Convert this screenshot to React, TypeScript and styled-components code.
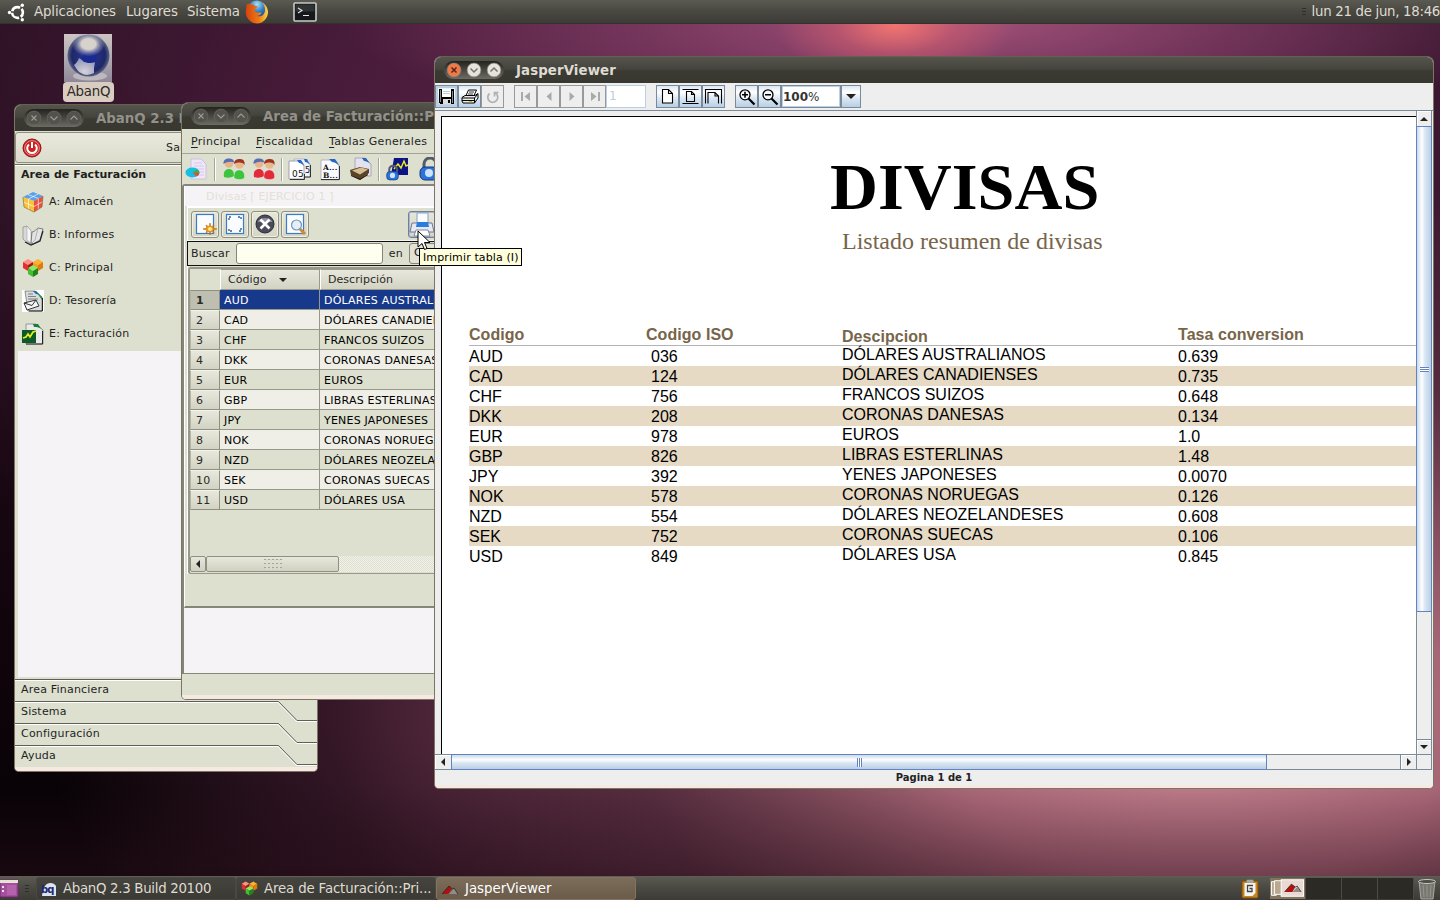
import React from 'react';
import styled, { createGlobalStyle, css } from 'styled-components';

const Global = createGlobalStyle`
  * { box-sizing: border-box; }
  body { margin: 0; overflow: hidden; font-family: "DejaVu Sans", sans-serif; }
`;

const Desktop = styled.div`
  position: relative;
  width: 1440px;
  height: 900px;
  overflow: hidden;
  display: flex;
  flex-direction: column;
  justify-content: space-between;
  background:
    radial-gradient(ellipse 120px 55px at 895px 26px, rgba(245, 118, 112, 0.95), rgba(215, 95, 110, 0.5) 50%, transparent 100%),
    radial-gradient(ellipse 600px 120px at 940px 20px, rgba(172, 88, 128, 0.9), rgba(146, 72, 114, 0.55) 50%, transparent 100%),
    linear-gradient(0deg, rgba(40, 12, 24, 0.55) 0, rgba(50, 18, 32, 0.4) 35px, transparent 110px),
    radial-gradient(ellipse 860px 560px at 1200px 720px, rgba(208, 140, 152, 0.95) 0%, rgba(184, 112, 130, 0.9) 30%, rgba(120, 66, 88, 0.55) 65%, transparent 100%),
    radial-gradient(ellipse 420px 330px at 470px 720px, rgba(84, 38, 62, 0.85), transparent 100%),
    radial-gradient(ellipse 1100px 560px at 800px 120px, #5c2448 0%, #4a1c3c 40%, rgba(50, 20, 40, 0.7) 75%, transparent 100%),
    linear-gradient(180deg, #2a1023 0%, #15060f 60%, #030102 100%);
`;

/* ---------- panels ---------- */

const panel = css`
  position: relative;
  display: flex;
  align-items: center;
  height: 24px;
  color: #dfdbd2;
  font-size: 13.33px;
  background: linear-gradient(180deg, #5b5a52 0%, #4a4942 45%, #3c3b37 100%);
`;

const TopPanel = styled.header`
  ${panel}
  padding-left: 7px;
  border-bottom: 1px solid #33322d;
`;

const PanelMenu = styled.span<{ $w: number }>`
  width: ${p => p.$w}px;
  line-height: 22px;
  letter-spacing: -0.12px;
  white-space: nowrap;
`;

const Clock = styled.span`
  margin-left: auto;
  display: flex;
  gap: 6px;
  align-items: center;
  white-space: nowrap;
  letter-spacing: -0.3px;
  line-height: 22px;
`;

const Grip = styled.i`
  width: 4px;
  height: 8px;
  background: repeating-linear-gradient(180deg, #2f2e2a 0 1px, transparent 1px 3px);
`;

const TaskPanel = styled.footer`
  ${panel}
  border-top: 1px solid #5f5c54;
`;

const Task = styled.div<{ $active?: boolean; $ls?: number }>`
  display: flex;
  flex: none;
  align-items: center;
  gap: 6px;
  width: 200px;
  height: 23px;
  padding-left: 4px;
  border: 1px solid ${p => (p.$active ? '#84735f' : '#494842')};
  border-radius: 3px;
  color: ${p => (p.$active ? '#fff' : '#dfdbd2')};
  letter-spacing: ${p => p.$ls ?? 0}px;
  line-height: 20px;
  white-space: nowrap;
  background: ${p => (p.$active ? 'linear-gradient(180deg,#7c6c59,#6a5b4a)' : 'linear-gradient(180deg,#45443e,#3a3934)')};
`;

const Tray = styled.div`
  margin-left: auto;
  display: flex;
  align-items: center;
  padding-right: 3px;
`;

const Workspaces = styled.div`
  display: flex;
  height: 21px;
  margin: 0 3px 0 11px;
`;

const Workspace = styled.div<{ $on?: boolean }>`
  display: flex;
  width: 36px;
  height: 21px;
  background: ${p => (p.$on ? '#83735f' : '#2b2a25')};
  border-right: 1px solid #4b4a45;
`;

/* ---------- desktop shortcut ---------- */

const Shortcut = styled.div`
  position: absolute;
  left: 63px;
  top: 34px;
  width: 51px;
  display: flex;
  flex-direction: column;
  svg { margin-left: 1px; }
`;

const ShortcutLabel = styled.span`
  width: 51px;
  height: 20px;
  border-radius: 4px;
  text-align: center;
  background: #d8cdc0;
  color: #2e2a26;
  font-size: 13.33px;
  letter-spacing: -0.2px;
  line-height: 19px;
`;

/* ---------- windows ---------- */

const Win = styled.section<{ $x: number; $y: number; $w: number; $h: number; $java?: boolean }>`
  position: absolute;
  left: ${p => p.$x}px;
  top: ${p => p.$y}px;
  width: ${p => p.$w}px;
  height: ${p => p.$h}px;
  display: flex;
  flex-direction: column;
  overflow: hidden;
  border: 1px solid #7d7563;
  border-top-color: #65614f;
  border-radius: 7px 7px 5px 5px;
  background: ${p => (p.$java ? '#eeeeee' : '#dddfcf')};
  font-size: 11px;
  letter-spacing: ${p => (p.$java ? 0 : 0.2)}px;
  color: #1f1f1f;
`;

const TitleBar = styled.div<{ $active?: boolean }>`
  display: flex;
  align-items: center;
  flex: none;
  height: 26px;
  padding-left: 9px;
  gap: 12px;
  white-space: nowrap;
  font-weight: bold;
  font-size: 13.33px;
  letter-spacing: ${p => (p.$active ? 0.1 : 0)}px;
  color: ${p => (p.$active ? '#dfdbd2' : '#94918a')};
  background: linear-gradient(180deg, #55544c 0%, #45453f 45%, #3a3a32 55%, #383831 100%);
`;

const WinButtons = styled.div<{ $active?: boolean }>`
  display: flex;
  flex: none;
  align-items: center;
  justify-content: space-between;
  width: 60px;
  height: 18px;
  padding: 0 2px;
  border-radius: 9px;
  background: linear-gradient(180deg, #24241f, #6c6b64);
`;

const BottomEdge = styled.div`
  flex: none;
  height: 4px;
  margin-top: auto;
  background: #f6e9e2;
`;

const ExitButton = styled.div`
  display: flex;
  flex: none;
  align-items: center;
  height: 31px;
  margin-top: 1px;
  padding-left: 6px;
  border: 1px solid #8e9080;
  border-radius: 3px;
  background: linear-gradient(180deg, #e8e8dc, #dcdccd);
`;

const ExitLabel = styled.span`
  margin-left: 124px;
`;

const AreaTitle = styled.div`
  flex: none;
  height: 21px;
  margin-top: 1px;
  padding-left: 6px;
  border-top: 1px solid #6a6a60;
  box-shadow: inset 0 1px #fff;
  font-weight: bold;
  letter-spacing: 0.05px;
  line-height: 20px;
`;

const ModuleList = styled.div`
  display: flex;
  flex-direction: column;
  flex: none;
  height: 166px;
`;

const ModuleRow = styled.div`
  display: flex;
  align-items: center;
  height: 33px;
  padding-left: 7px;
  gap: 5px;
`;

const EmptyArea = styled.div<{ $h: number; $ml?: number }>`
  flex: none;
  height: ${p => p.$h}px;
  margin-left: ${p => p.$ml ?? 0}px;
  background: #f6f3f7;
`;

const AreaTab = styled.div`
  display: flex;
  justify-content: space-between;
  flex: none;
  height: 22px;
  padding-left: 6px;
  line-height: 22px;
`;

const TabList = styled.div`
  display: flex;
  flex-direction: column;
  padding-top: 2px;
`;

const TabShape = styled.svg`
  display: block;
  margin-left: -302px;
`;

const TabLabel = styled.span`
  position: relative;
  width: 120px;
`;

/* ---------- billing window ---------- */

const MenuBar = styled.div`
  display: flex;
  flex: none;
  height: 25px;
  padding-left: 9px;
  line-height: 25px;
  letter-spacing: 0.3px;
  border-bottom: 1px solid #a3a497;
  white-space: nowrap;
  u { text-underline-offset: 2px; }
`;

const MenuItem = styled.span<{ $w: number }>`
  width: ${p => p.$w}px;
`;

const IconBar = styled.div`
  display: flex;
  flex: none;
  align-items: center;
  height: 30px;
  padding-left: 3px;
  svg { flex: none; }
`;

const Spacer = styled.i<{ $w: number; $line?: boolean }>`
  display: flex;
  flex: none;
  width: ${p => p.$w}px;
  height: 23px;
  justify-content: center;
  &::before {
    content: '';
    width: ${p => (p.$line ? 2 : 0)}px;
    background: linear-gradient(90deg, #a3a497 50%, #fff 50%);
  }
`;

const MdiArea = styled.div`
  display: flex;
  flex-direction: column;
  flex: none;
  height: 490px;
  border: 1px solid #85867a;
  border-top-width: 2px;
  border-left-width: 2px;
  border-radius: 3px 0 0 0;
  background: #f6f3f7;
`;

const SubWindow = styled.div`
  display: flex;
  flex-direction: column;
  height: 422px;
  border-left: 1px solid #fff;
  border-bottom: 2px solid #85867a;
  background: #dddfcf;
`;

const SubTitle = styled.div`
  flex: none;
  height: 20px;
  padding-left: 21px;
  line-height: 21px;
  background: #f6f3f7;
  color: #e3e1d5;
  letter-spacing: 0.18px;
`;

const SubBody = styled.div`
  display: flex;
  flex-direction: column;
  margin-left: 2px;
  border-top: 2px solid #fff;
  border-left: 1px solid #fff;
`;

const ActionBar = styled.div`
  display: flex;
  height: 33px;
  align-items: center;
  gap: 2px;
  padding-left: 3px;
  border-bottom: 1px solid #f4f4ee;
`;

const ActionButton = styled.div<{ $hot?: boolean; $push?: number }>`
  display: flex;
  flex: none;
  align-items: center;
  justify-content: center;
  width: 28px;
  height: 27px;
  margin-left: ${p => p.$push ?? 0}px;
  border: 1px solid ${p => (p.$hot ? '#6f7f9c' : '#8e9080')};
  border-radius: 3px;
  box-shadow: inset 0 0 0 1px ${p => (p.$hot ? '#a9b6cc' : '#efefe6')};
  background: linear-gradient(180deg, #e6e6d9, #d5d6c6);
`;

const SearchRow = styled.div`
  display: flex;
  align-items: center;
  height: 25px;
  margin-left: -1px;
  padding-left: 3px;
  border: 1px solid #111;
  border-right: 0;
`;

const SearchInput = styled.div`
  flex: none;
  width: 147px;
  height: 21px;
  margin: 0 6px 0 6px;
  border: 1px solid #85867a;
  border-radius: 3px;
  background: #fffff0;
`;

const FieldPick = styled.div`
  flex: none;
  width: 60px;
  height: 21px;
  margin-left: 6px;
  padding-left: 4px;
  line-height: 18px;
  border: 1px solid #85867a;
  border-radius: 3px;
  background: #e2e2d5;
`;

const Grid = styled.div`
  display: flex;
  flex-direction: column;
  height: 307px;
  margin-top: 1px;
  border: 2px solid #97988a;
  border-width: 2px 0 1px 2px;
  border-radius: 3px;
  white-space: nowrap;
`;

const GridRow = styled.div<{ $tone: 'sel' | 'light' | 'dark' | 'head' }>`
  display: grid;
  grid-template-columns: 30px 100px 170px;
  grid-template-rows: 100%;
  flex: none;
  height: ${p => (p.$tone === 'head' ? 21 : 20)}px;
  color: ${p => (p.$tone === 'sel' ? '#fff' : '#000')};
  background: ${p => ({ sel: '#17398c', light: '#efefe7', dark: '#dddfcf', head: '#dddfcf' }[p.$tone])};
`;

const HeadCell = styled.div<{ $plain?: boolean }>`
  display: flex;
  align-items: center;
  gap: 13px;
  padding-left: 7px;
  color: #2a2a26;
  letter-spacing: 0.05px;
  ${p =>
    !p.$plain &&
    css`
      border: 1px solid #9a9b8d;
      border-left-color: #fff;
      background: linear-gradient(180deg, #e7e7dc, #d3d3c4);
    `}
`;

const NumCell = styled.div<{ $sel?: boolean }>`
  padding-left: 5px;
  line-height: 19px;
  color: #2a2a26;
  font-weight: ${p => (p.$sel ? 'bold' : 'normal')};
  border: 1px solid #8e9080;
  border-top-color: ${p => (p.$sel ? '#8e9080' : '#f2f2ea')};
  border-left-color: #b5b6a8;
  background: ${p => (p.$sel ? '#bebfb0' : 'linear-gradient(180deg,#e7e7dc,#d3d3c4)')};
`;

const Cell = styled.div`
  padding-left: 4px;
  line-height: 21px;
  border-right: 1px solid #97988a;
  border-bottom: 1px solid #97988a;
`;

const GridScroll = styled.div`
  display: flex;
  height: 16px;
  margin-top: 46px;
  background: repeating-conic-gradient(#f2f2ea 0 25%, #dddfcf 0 50%) 0 0 / 2px 2px;
`;

const ScrollPart = styled.div<{ $w: number }>`
  display: flex;
  align-items: center;
  justify-content: center;
  width: ${p => p.$w}px;
  border: 1px solid #8e9080;
  border-radius: 2px;
  background: linear-gradient(180deg, #e7e7dc, #d0d1c0);
`;

const Dots = styled.i`
  width: 18px;
  height: 11px;
  background: repeating-linear-gradient(90deg, transparent 0 2px, #dcdccd 2px 4px),
    repeating-linear-gradient(180deg, #a3a497 0 1px, transparent 1px 4px);
`;

const Tooltip = styled.div`
  position: absolute;
  left: 419px;
  top: 248px;
  width: 103px;
  height: 18px;
  padding-left: 3px;
  border: 1px solid #000;
  background: #ffffdc;
  color: #000;
  font-size: 11px;
  letter-spacing: 0.12px;
  line-height: 17px;
  white-space: nowrap;
`;

const Pointer = styled.svg`
  position: absolute;
  left: 417px;
  top: 230px;
`;

/* ---------- report viewer ---------- */

const JavaBar = styled.div`
  display: flex;
  flex: none;
  height: 28px;
  padding-top: 2px;
  border-bottom: 1px solid #7a8a99;
`;

const ButtonGroup = styled.div<{ $ml?: number }>`
  display: flex;
  height: 23px;
  margin-left: ${p => p.$ml ?? 0}px;
`;

const JavaButton = styled.div<{ $off?: boolean; $focus?: boolean; $w?: number }>`
  display: flex;
  align-items: center;
  justify-content: center;
  width: ${p => p.$w ?? 23}px;
  border: 1px solid ${p => (p.$off ? '#999' : '#7a8a99')};
  background: ${p => (p.$off ? '#eee' : 'linear-gradient(180deg,#dde8f3 0%,#fff 30%,#dae6f2 60%,#b8cfe5 100%)')};
  box-shadow: ${p => (p.$focus ? 'inset 0 0 0 2px #b8cfe5' : 'none')};
`;

const PageField = styled.div`
  width: 40px;
  padding-left: 2px;
  border: 1px solid #b8cfe5;
  background: #fff;
  color: #b8cfe5;
  font-size: 12px;
  line-height: 21px;
`;

const ZoomField = styled.div`
  width: 60px;
  padding-left: 1px;
  border: 1px solid #7a8a99;
  box-shadow: inset 0 0 0 1px #b8cfe5;
  background: #fff;
  color: #333;
  font-size: 12px;
  line-height: 22px;
  b { font-weight: bold; }
`;

const ViewerBody = styled.div`
  display: grid;
  grid-template-columns: 981px 16px;
  grid-template-rows: 643px 16px;
  flex: none;
`;

const Viewport = styled.div`
  padding: 5px 0 0 6px;
  overflow: hidden;
`;

const Page = styled.div`
  height: 640px;
  border-top: 1px solid #000;
  border-left: 1px solid #000;
  background: #fff;
  padding-left: 27px;
`;

const ReportTitle = styled.h1`
  margin: 0 0 0 361px;
  padding-top: 32px;
  font: bold 66.4px/76px "Liberation Serif", serif;
  color: #000;
`;

const ReportSubtitle = styled.p`
  margin: 0 0 0 373px;
  font: 24px/32px "Liberation Serif", serif;
  color: #77654a;
`;

const ReportRow = styled.div<{ $band?: boolean; $head?: boolean }>`
  display: grid;
  grid-template-columns: 182px 191px 336px 1fr;
  height: 20px;
  background: ${p => (p.$band ? '#e6dac5' : 'transparent')};
  font: 16px/20px "Liberation Sans", sans-serif;
  color: #000;
  ${p =>
    p.$head &&
    css`
      grid-template-columns: 177px 196px 336px 1fr;
      height: 22px;
      margin-top: 67px;
      border-bottom: 1px solid #b4b4b4;
      font-weight: bold;
      letter-spacing: 0.05px;
      color: #77654a;
    `}
`;

const ReportCell = styled.span<{ $shift?: number }>`
  margin-top: ${p => p.$shift ?? 1}px;
  height: 18px;
  white-space: nowrap;
`;

const VScroll = styled.div`
  display: flex;
  flex-direction: column;
  border-left: 1px solid #7a8a99;
  border-right: 1px solid #7a8a99;
  background: #eee;
`;

const HScroll = styled.div`
  display: flex;
  border-top: 1px solid #7a8a99;
  border-bottom: 1px solid #7a8a99;
  background: #eee;
`;

const ArrowBox = styled.div<{ $side: 'top' | 'bottom' | 'left' | 'right' }>`
  display: flex;
  flex: none;
  align-items: center;
  justify-content: center;
  width: ${p => (p.$side === 'left' || p.$side === 'right' ? 16 : 14)}px;
  height: ${p => (p.$side === 'left' || p.$side === 'right' ? 14 : 15)}px;
  margin-left: ${p => (p.$side === 'right' ? 'auto' : 0)};
  margin-top: ${p => (p.$side === 'bottom' ? 'auto' : 0)};
  box-shadow: inset 1px 1px #fff;
  border-left: ${p => (p.$side === 'right' ? '1px solid #7a8a99' : 0)};
  border-top: ${p => (p.$side === 'bottom' ? '1px solid #7a8a99' : 0)};
`;

const Thumb = styled.div<{ $v?: boolean; $len: number }>`
  display: flex;
  align-items: center;
  justify-content: center;
  flex: none;
  border: 1px solid #6382bf;
  ${p =>
    p.$v
      ? css`
          height: ${p.$len}px;
          margin: 0 -1px;
          background: linear-gradient(90deg, #c8daec, #fff 35%, #dce8f4 55%, #b8cfe5);
        `
      : css`
          width: ${p.$len}px;
          margin: -1px 0;
          background: linear-gradient(180deg, #c8daec, #fff 35%, #dce8f4 55%, #b8cfe5);
        `}
`;

const ThumbGrip = styled.i<{ $v?: boolean }>`
  width: ${p => (p.$v ? 9 : 5)}px;
  height: ${p => (p.$v ? 5 : 9)}px;
  background: repeating-linear-gradient(${p => (p.$v ? '180deg' : '90deg')}, #6382bf 0 1px, #fff 1px 2px);
`;

const Corner = styled.div`
  border: 1px solid #7a8a99;
`;

const StatusText = styled.div`
  flex: none;
  height: 15px;
  text-align: center;
  font-weight: bold;
  font-size: 10px;
  line-height: 15px;
  color: #222;
`;

/* ---------- drawings ---------- */

type TriDir = 'up' | 'down' | 'left' | 'right';
const Tri = ({ d, w = 8, c = '#222' }: { d: TriDir; w?: number; c?: string }) => {
  const h = w / 2;
  const v = d === 'up' || d === 'down';
  const pts = {
    up: `0,${h} ${h},0 ${w},${h}`,
    down: `0,0 ${w},0 ${h},${h}`,
    left: `${h},0 ${h},${w} 0,${h}`,
    right: `0,0 0,${w} ${h},${h}`,
  }[d];
  return (
    <svg width={v ? w : h} height={v ? h : w}>
      <polygon points={pts} fill={c} />
    </svg>
  );
};

const WinDot = ({ kind, active }: { kind: 'x' | 'v' | 'a'; active?: boolean }) => {
  const fill = active ? (kind === 'x' ? '#ee7a4a' : '#e6e3dd') : '#53524c';
  const line = active ? (kind === 'x' ? '#5b2611' : '#77736a') : '#9c9a92';
  return (
    <svg width="16" height="16" viewBox="0 0 16 16">
      <circle cx="8" cy="8" r="6.9" fill={fill} stroke={active ? '#8a8279' : '#6b6a63'} strokeWidth="0.7" />
      <path
        d={kind === 'x' ? 'M5.5 5.5l5 5M10.500 5.500l-5 5' : kind === 'v' ? 'M4.500 6.500L8 10l3.500-3.500' : 'M4.500 9.500L8 6l3.500 3.500'}
        stroke={line}
        strokeWidth={active ? 1.5 : 1.1}
        fill="none"
      />
    </svg>
  );
};

const Controls = ({ active }: { active?: boolean }) => (
  <WinButtons $active={active}>
    <WinDot kind="x" active={active} />
    <WinDot kind="v" active={active} />
    <WinDot kind="a" active={active} />
  </WinButtons>
);

const UbuntuLogo = () => (
  <svg width="20" height="20" viewBox="0 0 20 20">
    <circle cx="10.500" cy="10.500" r="5.400" fill="none" stroke="#fff" strokeWidth="2.600" strokeDasharray="9.600 1.700" strokeDashoffset="-6.600" />
    <circle cx="2.500" cy="10.500" r="1.700" fill="#fff" />
    <circle cx="15.300" cy="3.300" r="1.700" fill="#fff" />
    <circle cx="15.300" cy="17.700" r="1.700" fill="#fff" />
  </svg>
);

const Firefox = () => (
  <svg width="24" height="24" viewBox="0 0 24 24">
    <defs>
      <radialGradient id="ffBlue" cx="0.5" cy="0.2" r="0.8">
        <stop offset="0" stopColor="#a8e0f6" />
        <stop offset="0.5" stopColor="#2f7cc4" />
        <stop offset="1" stopColor="#153a80" />
      </radialGradient>
      <linearGradient id="ffFox" x1="0" x2="1">
        <stop offset="0" stopColor="#d8430f" />
        <stop offset="0.6" stopColor="#ee7a14" />
        <stop offset="1" stopColor="#fbd64a" />
      </linearGradient>
    </defs>
    <circle cx="12" cy="10" r="9.500" fill="url(#ffBlue)" />
    <path d="M1.500 5C3 3 4 3.500 5 4.500c2-.8 4 0 5 1.500l2.500.5c-.5 1.500-2 2-3 3 0 2 1 3 3 3 2 .2 3-.5 4 .5-1 2-3 3-5 2.500 3 2 8 .5 8.500-5 .2-3-1-6-3-8 4 2 6.200 6 6 10-.3 6-5 11-11 11S.800 18 .800 12.500C.800 9.500 1.500 8 1.500 5z" fill="url(#ffFox)" />
  </svg>
);

const Terminal = () => (
  <svg width="24" height="20" viewBox="0 0 24 20">
    <rect x="1" y="1" width="22" height="18" rx="1" fill="#15181a" stroke="#c9cac8" strokeWidth="1.600" />
    <rect x="2.500" y="2.500" width="19" height="7" fill="#3a3e40" opacity=".7" />
    <path d="M5 6l4 2.500L5 11M10 13.500h6" stroke="#e8e8e8" strokeWidth="1.100" fill="none" />
  </svg>
);

const Globe = () => (
  <svg width="48" height="48" viewBox="0 0 48 48">
    <defs>
      <radialGradient id="gl" cx="0.5" cy="0.5" r="0.5">
        <stop offset="0" stopColor="#2c3a98" />
        <stop offset="0.8" stopColor="#1e2868" />
        <stop offset="1" stopColor="#5c6480" />
      </radialGradient>
      <radialGradient id="glTop">
        <stop offset="0.45" stopColor="#d8d2cd" />
        <stop offset="1" stopColor="#8e94b4" stopOpacity="0.1" />
      </radialGradient>
      <radialGradient id="glLow" cx="0.5" cy="0.8" r="0.8">
        <stop offset="0" stopColor="#d6d2d8" />
        <stop offset="1" stopColor="#8f95b8" />
      </radialGradient>
      <linearGradient id="glBg" x1="0" y1="0" x2="0" y2="1">
        <stop offset="0" stopColor="#cdc6c2" />
        <stop offset="0.6" stopColor="#aaa4b0" />
        <stop offset="1" stopColor="#8e8798" />
      </linearGradient>
    </defs>
    <rect width="48" height="48" fill="url(#glBg)" />
    <ellipse cx="26" cy="42" rx="17" ry="4.500" fill="#bdb8be" />
    <circle cx="24.500" cy="21.500" r="21" fill="url(#gl)" />
    <path d="M10 31c3-2 4-5 5-7l5 3 4 2 7-1-1 6 0 5c-4 2-9 3-13 0-3-1-5-5-7-8z" fill="url(#glLow)" />
    <path d="M19 20l6-2 9 1-2 9-6 1-6-1-3-3z" fill="#1b2a90" />
    <ellipse cx="24.500" cy="10" rx="16" ry="12" fill="url(#glTop)" />
  </svg>
);

const PowerIcon = () => (
  <svg width="20" height="20" viewBox="0 0 20 20">
    <circle cx="10" cy="10" r="9" fill="#cf2020" stroke="#8a1414" />
    <circle cx="10" cy="10" r="7.400" fill="none" stroke="#f0a0a0" strokeWidth=".8" />
    <path d="M7 6.500a4.800 4.800 0 1 0 6 0M10 4v6" stroke="#fff" strokeWidth="2" fill="none" />
  </svg>
);

const CubeIcon = () => (
  <svg width="22" height="22" viewBox="0 0 22 22">
    <path d="M1 6L11 1l10 4-9 5z" fill="#5aa0ea" />
    <path d="M1 6l11 4v11L2 16z" fill="#f8c33a" />
    <path d="M12 10l9-5-1 11-8 5z" fill="#e8503f" />
    <path d="M6.500 8v10.600M1.700 11.200l10.300 4.300 8.600-4.800M16.300 7.700v10.800M6 3.500l10.300 4M6.500 8l9.500-5" stroke="#fff" strokeOpacity=".7" strokeWidth=".9" fill="none" />
    <path d="M1 6l1 10 10 5 8-5 1-11" stroke="#8d7040" strokeWidth=".7" fill="none" />
  </svg>
);

const BookIcon = () => (
  <svg width="22" height="22" viewBox="0 0 22 22">
    <path d="M1 3l4-1 4 5 1 13-7-3-2-2z" fill="#d8d8d8" stroke="#8a8a8a" strokeWidth=".7" />
    <path d="M5 2l4 5v12l-4-3z" fill="#f6f6f6" stroke="#999" strokeWidth=".5" />
    <path d="M9 19l1-11c3 0 4-3 6-4l5 1-3 11-7 4z" fill="#e4e4e4" stroke="#666" strokeWidth=".8" />
    <path d="M16 4l-3 12-3 3" stroke="#999" strokeWidth=".7" fill="none" />
    <path d="M3 18l6 3 9-4 3-10" stroke="#222" strokeWidth="1.200" fill="none" />
  </svg>
);

const Cube3 = ({ x, y, c }: { x: number; y: number; c: [string, string, string] }) => (
  <g transform={`translate(${x} ${y})`}>
    <path d="M0 3L5 0l5 3-5 3z" fill={c[0]} />
    <path d="M0 3l5 3v6L0 9z" fill={c[1]} />
    <path d="M10 3L5 6v6l5-3z" fill={c[2]} />
  </g>
);

const BlocksIcon = ({ s = 22 }: { s?: number }) => (
  <svg width={s} height={s} viewBox="0 0 22 22">
    <Cube3 x={1} y={2} c={['#ff8f80', '#e23030', '#a81818']} />
    <Cube3 x={11} y={2} c={['#ffb030', '#f49a1c', '#e07c08']} />
    <Cube3 x={6} y={8} c={['#8de86a', '#42bf30', '#22831c']} />
  </svg>
);

const MailIcon = () => (
  <svg width="22" height="22" viewBox="0 0 22 22">
    <rect width="22" height="22" fill="#fdfdfd" />
    <path d="M3 1h10l7 6v14H6z" fill="#d9dcdc" stroke="#666" strokeWidth=".7" />
    <path d="M11 1h3l6 6c-2-2-4-3-6-3z" fill="#1b66a8" />
    <path d="M15 3l5 4v3z" fill="#1f8a4a" />
    <path d="M6 4h5M6 6.500h8M6 9h10" stroke="#777" strokeWidth=".9" />
    <path d="M2 13l12-3 3 6-12 4z" fill="#f5f5f5" stroke="#333" />
    <path d="M2 13l8 2.500 4-5.500" stroke="#333" fill="none" />
    <path d="M20.500 8v13H7" stroke="#222" fill="none" />
  </svg>
);

const ChartDocIcon = () => (
  <svg width="22" height="22" viewBox="0 0 22 22">
    <path d="M4 1h10l7 6v14H4z" fill="#e8ebe8" stroke="#777" strokeWidth=".7" />
    <path d="M11 1h5l4 6c-2-3-5-3-8-3z" fill="#1f7c3a" />
    <rect x="0" y="7" width="14" height="13" fill="#0d5a28" />
    <path d="M1 15l3-1 2-3 2 3 3-5 3-1" stroke="#e6ee20" strokeWidth="1.700" fill="none" />
    <path d="M20.500 8v13H4" stroke="#222" fill="none" />
  </svg>
);

const PieDocIcon = () => (
  <svg width="22" height="24" viewBox="0 0 22 24">
    <path d="M6 2h10l5 5v15H6z" fill="#efe6f8" stroke="#c9b8dc" strokeWidth=".8" />
    <path d="M9 6h8M9 9h10M9 12h10M9 15h10M9 18h10" stroke="#d8c8ea" strokeWidth="1" />
    <ellipse cx="7.500" cy="15.500" rx="7" ry="5" fill="#16c0e4" />
    <path d="M7.500 15.500h7a7 5 0 0 1-3 4z" fill="#e0502a" />
    <path d="M7.500 15.500h7a7 5 0 0 0-3-3z" fill="#3fae3a" />
  </svg>
);

const PeopleIcon = ({ c }: { c: string }) => (
  <svg width="24" height="24" viewBox="0 0 24 24">
    <circle cx="7" cy="6.500" r="4.300" fill="#e8b58a" />
    <path d="M1.500 7C1 2 5 1 8 1.500c3 .3 4 2 4 4C8 4 5 5 1.500 7z" fill="#5a6fb0" />
    <circle cx="17.500" cy="7.500" r="4.300" fill="#eab68d" />
    <path d="M12 7c0-4 3-5 6-5 4 0 5 3 4.500 6-2-3-6-3-10.500-1z" fill="#9c3420" />
    <path d="M2 20c-1-6 2-8 5-8s5 2 5 7c-3 2-7 2-10 1z" fill={c} />
    <path d="M12 21c-.5-6 2-8 5.500-8s5.500 3 5 8c-3 2-7 2-10.500 0z" fill={c} stroke="#fff" strokeOpacity=".5" strokeWidth=".7" />
  </svg>
);

const NumberDocIcon = () => (
  <svg width="24" height="24" viewBox="0 0 24 24">
    <path d="M6 2h11l5 5v13H6z" fill="#f4f2fb" stroke="#aaa6c0" strokeWidth=".8" />
    <path d="M1 4h10l5 5v13H1z" fill="#fff" stroke="#8f8ca6" strokeWidth=".8" />
    <path d="M9 3h4l4 6c-2-2-4-3-6-3zM16 2h3l3 6c-2-2-3-3-5-3z" fill="#2467c8" />
    <text x="4" y="20" fontFamily="DejaVu Sans" fontSize="9" fill="#111">05</text>
    <text x="17" y="16" fontFamily="DejaVu Sans" fontSize="8" fill="#111">5</text>
    <path d="M16.500 17v5.500H2M22.500 8v12H17" stroke="#333" fill="none" />
  </svg>
);

const LetterDocIcon = () => (
  <svg width="22" height="24" viewBox="0 0 22 24">
    <path d="M1 3h12l6 6v14H1z" fill="#fbfaff" stroke="#aaa6c0" strokeWidth=".8" />
    <path d="M9 2h6l5 7c-3-3-6-4-8-4z" fill="#2467c8" />
    <text x="3" y="13" fontFamily="DejaVu Serif" fontSize="7.500" fontWeight="bold" fill="#111">A...</text>
    <text x="3" y="21" fontFamily="DejaVu Serif" fontSize="7.500" fontWeight="bold" fill="#111">B...</text>
    <path d="M19.500 9v13.500H1" stroke="#333" fill="none" />
  </svg>
);

const HandDocIcon = () => (
  <svg width="24" height="24" viewBox="0 0 24 24">
    <path d="M6 1h10l6 6v12H6z" fill="#e4e2ee" stroke="#9d9ab0" strokeWidth=".8" />
    <path d="M13 1h4l5 7c-2-3-5-4-7-4z" fill="#2a66b8" />
    <path d="M1 13l10-3 9 2v4l-9 7-9-5z" fill="#5b4328" />
    <path d="M3 13.500l9-3 7 2-8 5z" fill="#d6be94" />
    <path d="M2 18.500l9 4 8-5" stroke="#1c140c" fill="none" />
  </svg>
);

const LockChartIcon = ({ chart }: { chart?: boolean }) => (
  <svg width="24" height="24" viewBox="0 0 24 24">
    {chart && <path d="M9 1h14v17H6z" fill="#0c1484" />}
    {chart && <path d="M9 12l4-5 3 4 3-7 2 5 2-1" stroke="#f0ec20" strokeWidth="1.400" fill="none" />}
    <g transform={chart ? 'translate(1 8) scale(.65)' : 'translate(2 0)'}>
      <path d="M5 12V7a6 6 0 0 1 12 0v5" stroke="#555a68" strokeWidth="3" fill="none" />
      <rect x="1" y="10" width="18" height="13" rx="5" fill="#2c72d8" stroke="#15377e" />
      <circle cx="10" cy="16" r="4" fill="#cfe2fb" />
    </g>
  </svg>
);

const SheetIcon = ({ kind }: { kind: 'new' | 'edit' | 'zoom' }) => (
  <svg width="24" height="24" viewBox="0 0 24 24">
    <rect x="3.500" y="2.500" width="17" height="19" fill="#fafcff" stroke="#3d7cc4" strokeWidth="1.200" />
    {kind === 'new' && (
      <g>
        <path d="M17 11l1 4 3-2-1 3 4 1-4 1 1 3-3-2-1 4-1-4-3 2 1-3-4-1 4-1-1-3 3 2z" fill="#f6a01c" stroke="#b76508" strokeWidth=".6" />
        <circle cx="17" cy="17" r="2" fill="#ffe680" />
      </g>
    )}
    {kind === 'edit' && <path d="M6 8V5h3M15 5h3v3M18 16v3h-3M9 19H6v-3" stroke="#3c5f92" strokeWidth="1.400" strokeDasharray="2 1" fill="none" />}
    {kind === 'zoom' && (
      <g>
        <path d="M17 17l5 5" stroke="#d08a2a" strokeWidth="3" />
        <circle cx="13.500" cy="13" r="5" fill="#e2f0fc" stroke="#7c93ac" strokeWidth="1.200" />
      </g>
    )}
  </svg>
);

const DeleteIcon = () => (
  <svg width="22" height="22" viewBox="0 0 22 22">
    <circle cx="11" cy="11" r="9" fill="#4a4a58" stroke="#2b2b36" />
    <path d="M3.500 9a8 6 0 0 1 15 0z" fill="#8f8fa4" />
    <path d="M6.500 6.500l9 9M15.500 6.500l-9 9" stroke="#fff" strokeWidth="2.600" />
  </svg>
);

const PrinterIcon = () => (
  <svg width="26" height="25" viewBox="0 0 26 25">
    <path d="M8 1h11v10H8z" fill="#f8fbff" stroke="#8fa0bc" />
    <path d="M3 11h20l2 9H1z" fill="#e6e9f2" stroke="#6c7890" />
    <path d="M8 10h11l1 5H7z" fill="#2a7de0" />
    <path d="M7 18h12l2 6H5z" fill="#fff" stroke="#8088a0" />
  </svg>
);

const SaveIcon = () => (
  <svg width="15" height="15" viewBox="0 0 15 15" shapeRendering="crispEdges">
    <path d="M0 0h15v15H1l-1-1z" fill="#000" />
    <path d="M1 1h1v12H1zM13 2h1v12h-1z" fill="#888" />
    <path d="M3 0h9v8H3z" fill="#fff" />
    <path d="M4 10h8v5H4z" fill="#ddd" />
    <path d="M4 2.500h7M4 4.500h7" stroke="#b8cfe5" />
    <path d="M9 11h2v3H9z" fill="#000" />
  </svg>
);

const PrintIcon = () => (
  <svg width="18" height="16" viewBox="0 0 18 16">
    <path d="M5 6.500L7.500 1h8L13 6.500z" fill="#fff" stroke="#000" />
    <path d="M8 3h5M7 5h5" stroke="#000" strokeWidth=".8" />
    <path d="M1 8.500l3-2h10l3-2v4.500l-3.500 5H2L1 12z" fill="#eee" stroke="#000" />
    <path d="M1 9h12.500l3-3.500M13.500 9v5M1 11.500h12" stroke="#000" fill="none" />
    <path d="M8 12.700h3" stroke="#c8c020" strokeWidth="1.200" />
  </svg>
);

const ReloadIcon = () => (
  <svg width="16" height="16" viewBox="0 0 16 16">
    <path d="M10 3.800a5 5 0 1 1-5.500.7M9.500 7.500V3.500H13.500" stroke="#b0b0b0" strokeWidth="1.700" fill="none" />
  </svg>
);

const NavIcon = ({ d, bar }: { d: 'l' | 'r'; bar?: boolean }) => (
  <svg width="16" height="16" viewBox="0 0 16 16">
    <g transform={d === 'r' ? 'translate(16 0) scale(-1 1)' : undefined}>
      {bar && <path d="M4 3v9" stroke="#a9a9a9" strokeWidth="2" />}
      <path d={bar ? 'M12 3v9L6.500 7.500z' : 'M10.500 3v9L5.500 7.500z'} fill="#a9a9a9" />
    </g>
  </svg>
);

const PageIcon = ({ kind }: { kind: 'actual' | 'fit' | 'width' }) => (
  <svg width="19" height="17" viewBox="0 0 19 17" fill="none" stroke="#000" strokeWidth="1.100">
    {kind === 'actual' && <path d="M4.500 1.500h6l4 4v9.500h-10zM10.500 1.500v4h4" fill="#fff" />}
    {kind === 'fit' && <path d="M1.500 1.500h16M1.500 15.500h16M5.500 3.500h5l3 3v7h-8zM10.500 3.500v3h3" />}
    {kind === 'width' && <path d="M1.500 15.500V1.500h16v14M4 15.500v-11h7l3.500 3.500v7.500M11 4.500v3.500h3.500" />}
  </svg>
);

const LensIcon = ({ plus }: { plus?: boolean }) => (
  <svg width="18" height="18" viewBox="0 0 18 18">
    <path d="M10.500 10.500l6 6" stroke="#000" strokeWidth="2.200" />
    <circle cx="7" cy="6.800" r="5" fill="#f4f8fc" stroke="#000" strokeWidth="1.300" />
    <path d={plus ? 'M4 6.800h6M7 3.800v6' : 'M4 6.800h6'} stroke="#000" strokeWidth="1.600" />
  </svg>
);

const JasperIcon = () => (
  <svg width="18" height="16" viewBox="0 0 18 16">
    <path d="M8 13l5-6 4 6z" fill="#8d8d8d" />
    <path d="M1 13l7-8 3 3-4 5z" fill="#b01010" />
    <path d="M1 13l7-8 3.500 3L13 7l4 6" stroke="#222" strokeWidth=".8" fill="none" />
  </svg>
);

const AppIcon = () => (
  <svg width="16" height="16" viewBox="0 0 16 16">
    <path d="M4 5c2-4 9-4 11 0v10H1l1-7z" fill="#dfe3f0" />
    <text x="0" y="12" fontFamily="DejaVu Sans" fontSize="10" fontWeight="bold" fill="#1c2a70" textLength="13">bq</text>
  </svg>
);

const ShowDesktopIcon = () => (
  <svg width="20" height="20" viewBox="0 0 20 20">
    <rect x="0" y="1" width="18" height="17" rx="1" fill="#a64f9e" stroke="#6b2a68" />
    <rect x="0" y="1" width="18" height="3" fill="#e6e2d4" />
    <path d="M2 7h2v2H2zM2 11h2v2H2z" fill="#f4e6f2" />
    <rect x="7" y="6" width="9" height="10" fill="#c070b8" opacity=".6" />
  </svg>
);

const ClipboardIcon = () => (
  <svg width="18" height="20" viewBox="0 0 18 20">
    <rect x="1" y="2" width="16" height="17" rx="1.500" fill="#c98422" stroke="#7c4c0c" />
    <path d="M3.500 4h11v10l-3 3h-8z" fill="#f4f4f0" />
    <rect x="5.500" y=".8" width="7" height="3" rx="1" fill="#a8a8a4" />
    <path d="M12 6.500H6.500v6H11V9.500H8.500" stroke="#444" strokeWidth="1.300" fill="none" />
  </svg>
);

const MiniWindows = () => (
  <svg width="36" height="21" viewBox="0 0 36 21">
    <path d="M1.500 3.500h5v14h-5z" fill="#b8a88f" stroke="#fff" />
    <path d="M4.500 2.500h8v14h-8z" fill="#b8a88f" stroke="#fff" />
    <rect x="11.500" y="1.500" width="23" height="17" fill="#e9d9d2" stroke="#fff" />
    <path d="M23 14l5-5 4 5z" fill="#8d8d8d" />
    <path d="M15 14l7-8 4 3-3 5z" fill="#b01010" />
    <path d="M15 14l7-8 4 3 2-1 4 6" stroke="#222" strokeWidth=".8" fill="none" />
  </svg>
);

const TrashIcon = () => (
  <svg width="20" height="22" viewBox="0 0 20 22">
    <path d="M2 3h16l-2 18H4z" fill="#77776f" stroke="#a9a9a2" />
    <ellipse cx="10" cy="3.500" rx="8.500" ry="2" fill="#4d4d47" stroke="#c6c6c0" />
    <path d="M6 7l1 12M10 7v12M14 7l-1 12" stroke="#96968e" />
  </svg>
);

/* ---------- data ---------- */

const currencies = [
  ['AUD', '036', 'DÓLARES AUSTRALIANOS', '0.639'],
  ['CAD', '124', 'DÓLARES CANADIENSES', '0.735'],
  ['CHF', '756', 'FRANCOS SUIZOS', '0.648'],
  ['DKK', '208', 'CORONAS DANESAS', '0.134'],
  ['EUR', '978', 'EUROS', '1.0'],
  ['GBP', '826', 'LIBRAS ESTERLINAS', '1.48'],
  ['JPY', '392', 'YENES JAPONESES', '0.0070'],
  ['NOK', '578', 'CORONAS NORUEGAS', '0.126'],
  ['NZD', '554', 'DÓLARES NEOZELANDESES', '0.608'],
  ['SEK', '752', 'CORONAS SUECAS', '0.106'],
  ['USD', '849', 'DÓLARES USA', '0.845'],
];

const modules: [React.ReactNode, string][] = [
  [<CubeIcon />, 'A: Almacén'],
  [<BookIcon />, 'B: Informes'],
  [<BlocksIcon />, 'C: Principal'],
  [<MailIcon />, 'D: Tesorería'],
  [<ChartDocIcon />, 'E: Facturación'],
];

const AbanqWindow = () => (
  <Win $x={14} $y={104} $w={304} $h={668}>
    <TitleBar>
      <Controls />
      AbanQ 2.3 Build 20100
    </TitleBar>
    <ExitButton>
      <PowerIcon />
      <ExitLabel>Salir</ExitLabel>
    </ExitButton>
    <AreaTitle>Area de Facturación</AreaTitle>
    <ModuleList>
      {modules.map(([icon, name]) => (
        <ModuleRow key={name}>
          {icon}
          {name}
        </ModuleRow>
      ))}
    </ModuleList>
    <EmptyArea $h={326} $ml={3} />
    <TabList>
      {['Area Financiera', 'Sistema', 'Configuración', 'Ayuda'].map(t => (
        <AreaTab key={t}>
          <TabLabel>{t}</TabLabel>
          <TabShape width="302" height="22" fill="none">
            <path d="M0 1.500H263l18.500 19H302" stroke="#fff" />
            <path d="M0 .5H263.500l18.500 19H302" stroke="#5f5f57" />
          </TabShape>
        </AreaTab>
      ))}
    </TabList>
    <BottomEdge />
  </Win>
);

const BillingWindow = () => (
  <Win $x={181} $y={102} $w={264} $h={598}>
    <TitleBar>
      <Controls />
      Area de Facturación::Principal
    </TitleBar>
    <MenuBar>
      <MenuItem $w={65}><u>P</u>rincipal</MenuItem>
      <MenuItem $w={73}><u>F</u>iscalidad</MenuItem>
      <MenuItem $w={110}><u>T</u>ablas Generales</MenuItem>
    </MenuBar>
    <IconBar>
      <PieDocIcon />
      <Spacer $w={15} $line />
      <PeopleIcon c="#3cc43c" />
      <Spacer $w={6} />
      <PeopleIcon c="#e22a3a" />
      <Spacer $w={12} $line />
      <NumberDocIcon />
      <Spacer $w={8} />
      <LetterDocIcon />
      <Spacer $w={7} />
      <HandDocIcon />
      <Spacer $w={12} $line />
      <LockChartIcon chart />
      <Spacer $w={8} />
      <LockChartIcon />
    </IconBar>
    <MdiArea>
      <SubWindow>
        <SubTitle>Divisas [ EJERCICIO 1 ]</SubTitle>
        <SubBody>
          <ActionBar>
            <ActionButton><SheetIcon kind="new" /></ActionButton>
            <ActionButton><SheetIcon kind="edit" /></ActionButton>
            <ActionButton><DeleteIcon /></ActionButton>
            <ActionButton><SheetIcon kind="zoom" /></ActionButton>
            <ActionButton $hot $push={97}><PrinterIcon /></ActionButton>
          </ActionBar>
          <SearchRow>
            Buscar
            <SearchInput />
            en
            <FieldPick>Código</FieldPick>
          </SearchRow>
          <Grid>
            <GridRow $tone="head">
              <HeadCell $plain />
              <HeadCell>Código <Tri d="down" /></HeadCell>
              <HeadCell>Descripción</HeadCell>
            </GridRow>
            {currencies.map(([code, , name], i) => (
              <GridRow key={code} $tone={i === 0 ? 'sel' : i % 2 ? 'light' : 'dark'}>
                <NumCell $sel={i === 0}>{i + 1}</NumCell>
                <Cell>{code}</Cell>
                <Cell>{name}</Cell>
              </GridRow>
            ))}
            <GridScroll>
              <ScrollPart $w={16}><Tri d="left" /></ScrollPart>
              <ScrollPart $w={133}><Dots /></ScrollPart>
            </GridScroll>
          </Grid>
        </SubBody>
      </SubWindow>
    </MdiArea>
    <BottomEdge />
  </Win>
);

const ViewerWindow = () => (
  <Win $x={434} $y={56} $w={1000} $h={733} $java>
    <TitleBar $active>
      <Controls active />
      JasperViewer
    </TitleBar>
    <JavaBar>
      <ButtonGroup>
        <JavaButton $focus><SaveIcon /></JavaButton>
        <JavaButton><PrintIcon /></JavaButton>
        <JavaButton $off><ReloadIcon /></JavaButton>
      </ButtonGroup>
      <ButtonGroup $ml={10}>
        <JavaButton $off><NavIcon d="l" bar /></JavaButton>
        <JavaButton $off><NavIcon d="l" /></JavaButton>
        <JavaButton $off><NavIcon d="r" /></JavaButton>
        <JavaButton $off><NavIcon d="r" bar /></JavaButton>
        <PageField>1</PageField>
      </ButtonGroup>
      <ButtonGroup $ml={10}>
        <JavaButton><PageIcon kind="actual" /></JavaButton>
        <JavaButton><PageIcon kind="fit" /></JavaButton>
        <JavaButton><PageIcon kind="width" /></JavaButton>
      </ButtonGroup>
      <ButtonGroup $ml={10}>
        <JavaButton><LensIcon plus /></JavaButton>
        <JavaButton><LensIcon /></JavaButton>
        <ZoomField><b>100</b>%</ZoomField>
        <JavaButton $w={20}><Tri d="down" w={10} /></JavaButton>
      </ButtonGroup>
    </JavaBar>
    <ViewerBody>
      <Viewport>
        <Page>
          <ReportTitle>DIVISAS</ReportTitle>
          <ReportSubtitle>Listado resumen de divisas</ReportSubtitle>
          <ReportRow $head>
            <ReportCell>Codigo</ReportCell>
            <ReportCell>Codigo ISO</ReportCell>
            <ReportCell $shift={3}>Descipcion</ReportCell>
            <ReportCell>Tasa conversion</ReportCell>
          </ReportRow>
          {currencies.map(([code, iso, name, rate], i) => (
            <ReportRow key={code} $band={i % 2 === 1}>
              <ReportCell>{code}</ReportCell>
              <ReportCell>{iso}</ReportCell>
              <ReportCell $shift={-1}>{name}</ReportCell>
              <ReportCell>{rate}</ReportCell>
            </ReportRow>
          ))}
        </Page>
      </Viewport>
      <VScroll>
        <ArrowBox $side="top"><Tri d="up" /></ArrowBox>
        <Thumb $v $len={486}><ThumbGrip $v /></Thumb>
        <ArrowBox $side="bottom"><Tri d="down" /></ArrowBox>
      </VScroll>
      <HScroll>
        <ArrowBox $side="left"><Tri d="left" /></ArrowBox>
        <Thumb $len={816}><ThumbGrip /></Thumb>
        <ArrowBox $side="right"><Tri d="right" /></ArrowBox>
      </HScroll>
      <Corner />
    </ViewerBody>
    <StatusText>Pagina 1 de 1</StatusText>
    <BottomEdge />
  </Win>
);

export default function App() {
  return (
    <>
      <Global />
      <Desktop>
        <TopPanel>
          <UbuntuLogo />
          <Spacer $w={7} />
          <PanelMenu $w={92}>Aplicaciones</PanelMenu>
          <PanelMenu $w={61}>Lugares</PanelMenu>
          <PanelMenu $w={58}>Sistema</PanelMenu>
          <Firefox />
          <Spacer $w={24} />
          <Terminal />
          <Clock><Grip />lun 21 de jun, 18:46</Clock>
        </TopPanel>
        <Shortcut>
          <Globe />
          <ShortcutLabel>AbanQ</ShortcutLabel>
        </Shortcut>
        <AbanqWindow />
        <BillingWindow />
        <ViewerWindow />
        <Tooltip>Imprimir tabla (I)</Tooltip>
        <Pointer width="14" height="22" viewBox="0 0 14 22">
          <path d="M1 1v16l4-3.500 2.500 6 2.500-1-2.500-6H13z" fill="#fff" stroke="#000" />
        </Pointer>
        <TaskPanel>
          <ShowDesktopIcon />
          <Spacer $w={5} />
          <Grip />
          <Spacer $w={7} />
          <Task $ls={-0.3}><AppIcon />AbanQ 2.3 Build 20100</Task>
          <Task $ls={-0.15}><BlocksIcon s={17} />Area de Facturación::Pri...</Task>
          <Task $active><JasperIcon />JasperViewer</Task>
          <Tray>
            <ClipboardIcon />
            <Workspaces>
              <Workspace $on><MiniWindows /></Workspace>
              <Workspace />
              <Workspace />
              <Workspace />
            </Workspaces>
            <TrashIcon />
          </Tray>
        </TaskPanel>
      </Desktop>
    </>
  );
}
